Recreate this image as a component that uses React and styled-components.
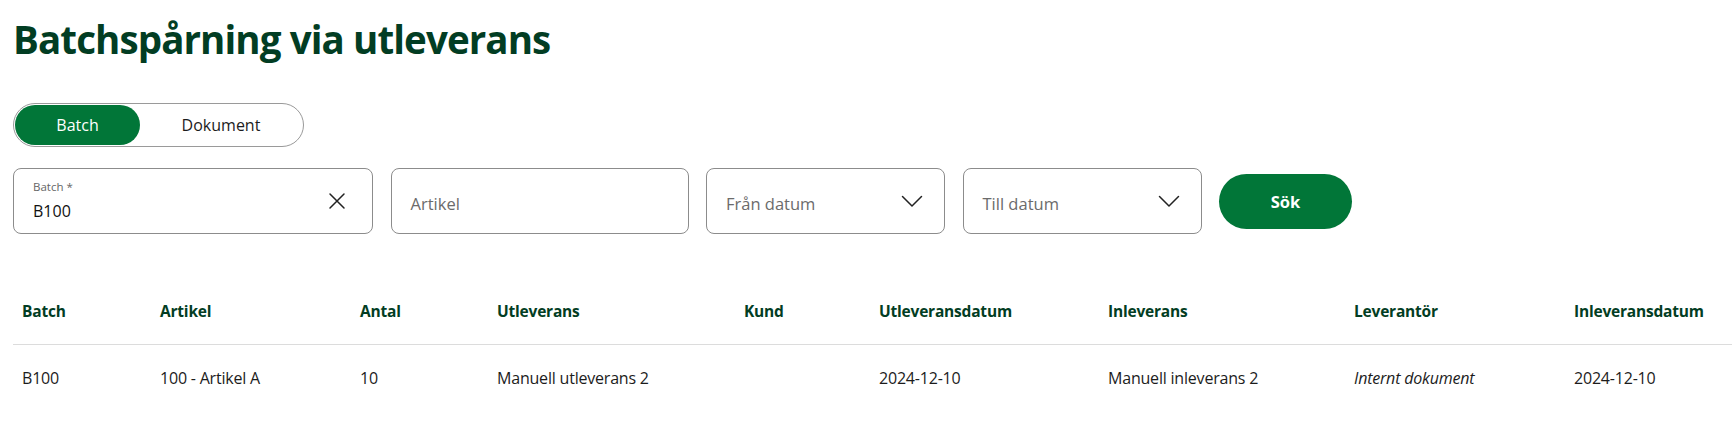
import React, { useState } from "react";
import styled, { createGlobalStyle } from "styled-components";

const GlobalStyle = createGlobalStyle`
  html, body { margin: 0; padding: 0; background: #ffffff; }
  body { font-family: "Open Sans", "Noto Sans", Arial, sans-serif; color: #1c1c1c; }
  * { box-sizing: border-box; }
`;

const GREEN = "#017638";
const DARK = "#023d23";

const Page = styled.div`
  padding: 15px 0 0 13px;
  overflow: hidden;
`;

const Title = styled.h1`
  margin: 0;
  font-size: 38.5px;
  line-height: 48px;
  font-weight: 700;
  color: ${DARK};
  letter-spacing: -0.9px;
`;

const Toggle = styled.div`
  margin-top: 40px;
  display: inline-flex;
  padding: 1px;
  height: 44px;
  border: 1px solid #9a9a9a;
  border-radius: 22px;
  background: #fff;
`;

const ToggleButton = styled.button`
  width: ${(p) => p.$w}px;
  height: 40px;
  border: none;
  border-radius: 20px;
  font-family: inherit;
  font-size: 16px;
  cursor: pointer;
  background: ${(p) => (p.$active ? GREEN : "transparent")};
  color: ${(p) => (p.$active ? "#ffffff" : "#1c1c1c")};
`;

const FilterRow = styled.div`
  margin-top: 21px;
  display: flex;
  align-items: center;
  gap: 17.5px;
`;

const Field = styled.div`
  position: relative;
  width: ${(p) => p.$w}px;
  height: 66px;
  border: 1px solid #8c8c8c;
  border-radius: 8px;
  padding: 0 20px 0 19px;
  display: flex;
  align-items: center;
  justify-content: space-between;
  background: #fff;
`;

const FieldText = styled.div`
  display: flex;
  flex-direction: column;
`;

const FieldLabel = styled.span`
  font-size: 11.5px;
  line-height: 16px;
  color: #666;
  margin-top: -1px;
`;

const FieldValue = styled.span`
  font-size: 16px;
  line-height: 24px;
  color: #111;
  margin-top: 4px;
`;

const Placeholder = styled.span`
  font-size: 16.5px;
  line-height: 24px;
  color: #6b6b6b;
  margin-top: 5px;
`;

const IconSlot = styled.span`
  display: flex;
  align-items: center;
  justify-content: center;
  width: 24px;
  height: 24px;
  margin-right: ${(p) => p.$mr || 0}px;
  color: #222;
`;

const SearchButton = styled.button`
  width: 133px;
  height: 55px;
  border: none;
  border-radius: 28px;
  background: ${GREEN};
  color: #fff;
  font-family: inherit;
  font-weight: 700;
  font-size: 16.5px;
  cursor: pointer;
`;

const Table = styled.div`
  margin-top: 49px;
  display: grid;
  grid-template-columns: 138px 200px 137px 247px 135px 229px 246px 220px 1fr;
  width: calc(100% + 40px);
`;

const HeadCell = styled.div`
  padding: 16px 9px 21px;
  font-size: 15.5px;
  line-height: 24px;
  font-weight: 700;
  color: ${DARK};
  border-bottom: 1px solid #dcdcdc;
  white-space: nowrap;
  letter-spacing: -0.2px;
`;

const Cell = styled.div`
  padding: 21px 9px 20px;
  font-size: 16px;
  line-height: 24px;
  color: #1c1c1c;
  font-style: ${(p) => (p.$italic ? "italic" : "normal")};
  white-space: nowrap;
  letter-spacing: -0.2px;
`;

const CloseIcon = () => (
  <svg width="18" height="18" viewBox="0 0 18 18" fill="none" stroke="#222" strokeWidth="1.5" strokeLinecap="round">
    <path d="M2 2 L16 16 M16 2 L2 16" />
  </svg>
);

const Chevron = () => (
  <svg width="22" height="13" viewBox="0 0 22 13" fill="none" stroke="#222" strokeWidth="1.5" strokeLinecap="round" strokeLinejoin="round">
    <path d="M1.5 1.5 L11 11 L20.5 1.5" />
  </svg>
);

const headers = [
  "Batch",
  "Artikel",
  "Antal",
  "Utleverans",
  "Kund",
  "Utleveransdatum",
  "Inleverans",
  "Leverantör",
  "Inleveransdatum",
];

const row = [
  { v: "B100" },
  { v: "100 - Artikel A" },
  { v: "10" },
  { v: "Manuell utleverans 2" },
  { v: "" },
  { v: "2024-12-10" },
  { v: "Manuell inleverans 2" },
  { v: "Internt dokument", italic: true },
  { v: "2024-12-10" },
];

export default function App() {
  const [mode, setMode] = useState("batch");
  return (
    <Page>
      <GlobalStyle />
      <Title>Batchspårning via utleverans</Title>
      <Toggle>
        <ToggleButton $w={125} $active={mode === "batch"} onClick={() => setMode("batch")}>
          Batch
        </ToggleButton>
        <ToggleButton $w={162} $active={mode === "dokument"} onClick={() => setMode("dokument")}>
          Dokument
        </ToggleButton>
      </Toggle>
      <FilterRow>
        <Field $w={360}>
          <FieldText>
            <FieldLabel>Batch *</FieldLabel>
            <FieldValue>B100</FieldValue>
          </FieldText>
          <IconSlot $mr={3}>
            <CloseIcon />
          </IconSlot>
        </Field>
        <Field $w={298}>
          <Placeholder>Artikel</Placeholder>
        </Field>
        <Field $w={239}>
          <Placeholder>Från datum</Placeholder>
          <IconSlot>
            <Chevron />
          </IconSlot>
        </Field>
        <Field $w={239}>
          <Placeholder>Till datum</Placeholder>
          <IconSlot>
            <Chevron />
          </IconSlot>
        </Field>
        <SearchButton>Sök</SearchButton>
      </FilterRow>
      <Table>
        {headers.map((h) => (
          <HeadCell key={h}>{h}</HeadCell>
        ))}
        {row.map((c, i) => (
          <Cell key={i} $italic={c.italic}>
            {c.v}
          </Cell>
        ))}
      </Table>
    </Page>
  );
}
